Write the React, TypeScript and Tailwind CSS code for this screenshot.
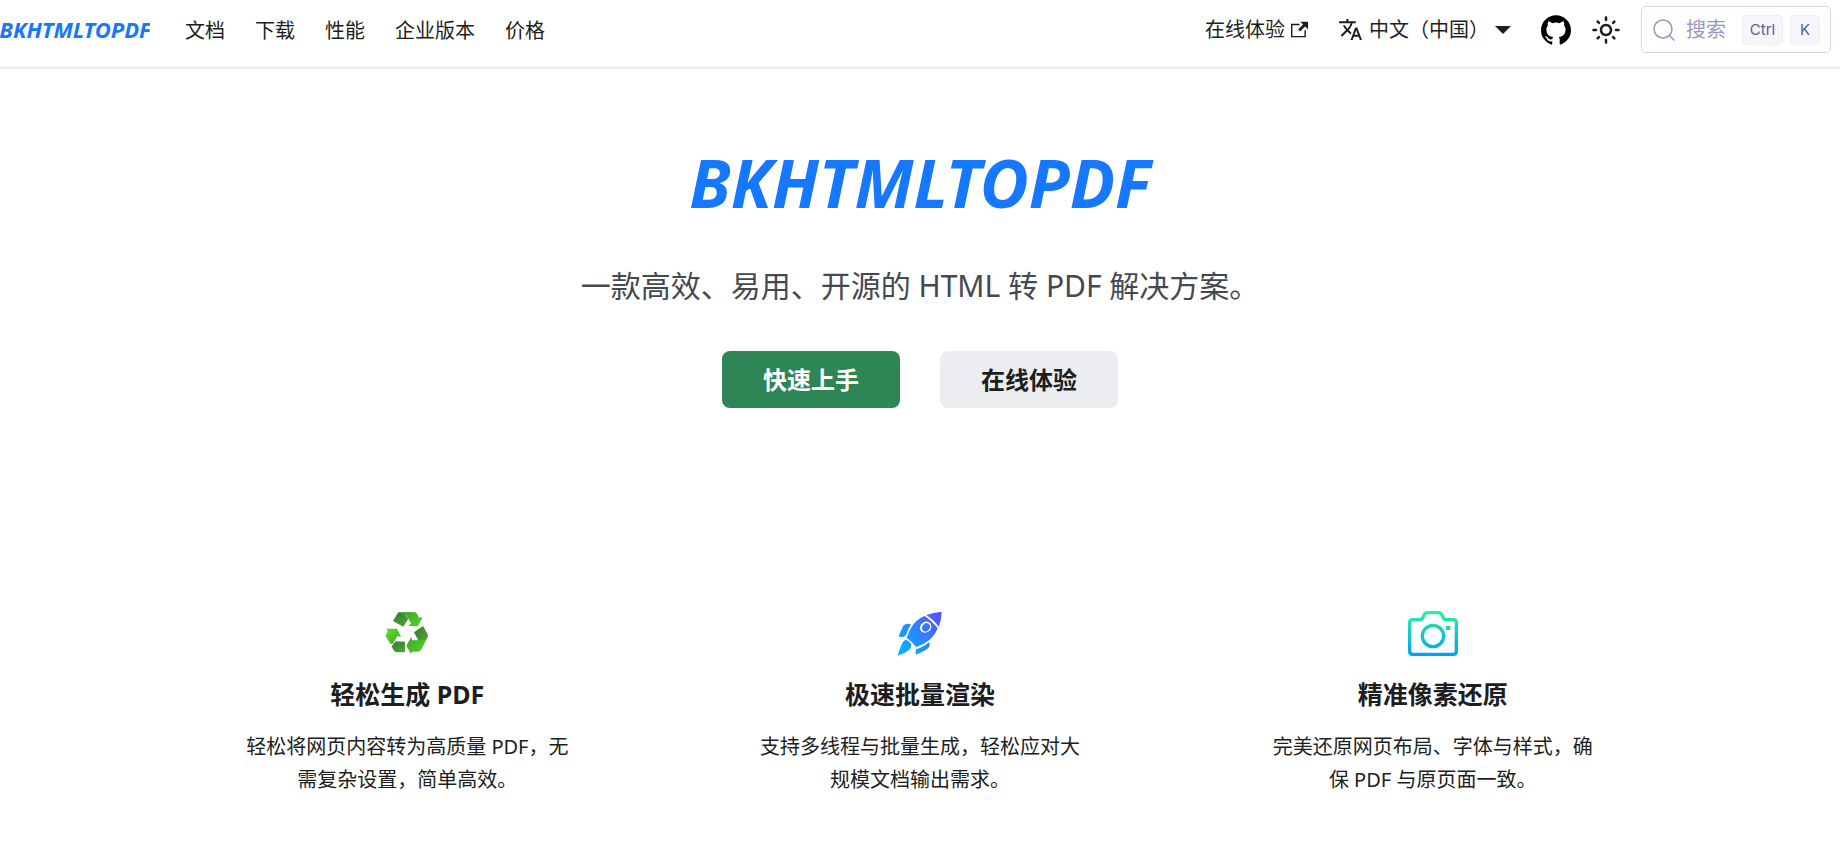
import React from 'react';

const navLinks = ['文档', '下载', '性能', '企业版本', '价格'];

const RecycleIcon = () => (
  <svg viewBox="40 25 150 150" className="size-[50px]" aria-hidden="true">
    <defs>
      <linearGradient id="leafA" x1="0" y1="0" x2="1" y2="1">
        <stop offset="0" stopColor="#35a52b" />
        <stop offset="1" stopColor="#58d824" />
      </linearGradient>
      <linearGradient id="leafB" x1="0" y1="0" x2="1" y2="1">
        <stop offset="0" stopColor="#66e01f" />
        <stop offset="1" stopColor="#35a52c" />
      </linearGradient>
      <linearGradient id="leafDark" x1="0" y1="0" x2="1" y2="1">
        <stop offset="0" stopColor="#2f7a2e" />
        <stop offset="1" stopColor="#55a83a" />
      </linearGradient>
    </defs>
    <path d="M89 38 L106 38 L119 57 L104 81 L73 64 Z" fill="url(#leafDark)" />
    <path d="M103 37 L139 38 Q144 39 147 46 L151 54 L162 53 L148 80 L120 79 L127 71 L112 45 Z" fill="url(#leafA)" />
    <path d="M53 87 L85 87 L97 112 L86 109 L73 132 L66 133 L52 112 Q50 107 53 102 L57 95 Z" fill="url(#leafB)" />
    <path d="M81 125 L109 126 L109 158 L84 158 Q77 157 74 150 L69 140 Z" fill="url(#leafDark)" />
    <path d="M163 79 L177 104 Q179 109 176 115 L170 125 L150 124 L136 98 Z" fill="url(#leafDark)" />
    <path d="M128 111 L130 122 L172 121 L159 148 Q155 156 146 156 L130 156 L127 163 L113 138 Z" fill="url(#leafA)" />
  </svg>
);

const RocketIcon = () => (
  <svg viewBox="49 25 150 150" className="size-[50px]" aria-hidden="true">
    <defs>
      <linearGradient id="rocket" gradientUnits="userSpaceOnUse" x1="60" y1="150" x2="189" y2="50">
        <stop offset="0" stopColor="#00b4ff" />
        <stop offset="1" stopColor="#5a50ff" />
      </linearGradient>
    </defs>
    <g fill="url(#rocket)">
      <path d="M143 46 Q164 38 189 36 Q189 60 180 81 Q172 70 162 61 Q153 53 143 46 Z" />
      <path
        fillRule="evenodd"
        d="M138 49 Q158 62 177 86 Q168 108 151 122 Q134 136 112 142 Q101 126 84 115 Q90 94 103 75 Q118 57 138 49 Z M136 67 Q124 73 124 86 Q126 99 138 99 Q153 98 158 84 Q158 68 147 66 Q141 65 136 67 Z"
      />
      <ellipse cx="142" cy="83" rx="11" ry="13" transform="rotate(38 142 83)" />
      <path d="M80 74 Q86 71 97 74 Q88 89 82 106 Q78 111 73 112 L63 112 Q60 111 61 107 L72 82 Q75 76 80 74 Z" />
      <path d="M151 128 Q156 139 149 145 Q142 152 114 164 Q110 165 111 160 L112 149 Q134 143 151 128 Z" />
      <path d="M82 121 Q92 123 98 135 Q98 145 91 151 Q82 159 60 167 Q57 168 58 164 Q66 136 75 125 Q78 121 82 121 Z" />
    </g>
  </svg>
);

const CameraIcon = () => (
  <svg viewBox="54 25 150 150" className="size-[50px]" aria-hidden="true">
    <defs>
      <linearGradient id="camera" gradientUnits="userSpaceOnUse" x1="129" y1="34" x2="129" y2="170">
        <stop offset="0" stopColor="#2af598" />
        <stop offset="1" stopColor="#009efd" />
      </linearGradient>
    </defs>
    <g fill="none" stroke="url(#camera)" strokeWidth="10" strokeLinejoin="round">
      <path d="M68 60 H90 Q96 60 98 55 L102 46 Q105 39 112 39 H146 Q153 39 156 46 L160 55 Q162 60 168 60 H190 Q199 60 199 69 V155 Q199 164 190 164 H68 Q59 164 59 155 V69 Q59 60 68 60 Z" />
      <circle cx="129" cy="109" r="32" />
    </g>
    <path d="M168 79 H181 V91 H168 Z" fill="#1cdcae" />
  </svg>
);

const features = [
  {
    title: '轻松生成 PDF',
    icon: <RecycleIcon />,
    text: '轻松将网页内容转为高质量 PDF，无需复杂设置，简单高效。',
  },
  {
    title: '极速批量渲染',
    icon: <RocketIcon />,
    text: '支持多线程与批量生成，轻松应对大规模文档输出需求。',
  },
  {
    title: '精准像素还原',
    icon: <CameraIcon />,
    text: '完美还原网页布局、字体与样式，确保 PDF 与原页面一致。',
  },
];

const Navbar = () => {
  return (
    <header className="flex h-[68px] items-center justify-between border-b border-[#e9e9ea] pr-[9px] pb-2 shadow-[0_1px_2px_rgba(0,0,0,0.06)]">
      <nav className="flex items-baseline" aria-label="主导航">
        {/* Logo */}
        <a
          href="#"
          className="mr-5 flex w-[150px] justify-center overflow-hidden text-[22px] leading-7 font-bold text-[#1677ff] italic"
        >
          BKHTMLTOPDF
        </a>
        {navLinks.map((link) => (
          <a key={link} href="#" className="px-[15px] hover:text-[#2e8555]">
            {link}
          </a>
        ))}
      </nav>

      <div className="flex items-center">
        <a href="#" className="flex items-center gap-[6px] px-[15px]">
          在线体验
          <svg viewBox="0 0 24 24" className="size-[17px]" fill="currentColor" aria-hidden="true">
            <path d="M21 13v10h-21v-19h12v2h-10v15h17v-8h2zm3-12h-10.988l4.035 4-6.977 7.07 2.828 2.828 6.977-7.07 4.125 4.172v-11z" />
          </svg>
        </a>
        <button type="button" className="flex items-center px-[15px]">
          <svg viewBox="0 0 24 24" className="mr-[6px] size-[25px]" fill="currentColor" aria-hidden="true">
            <path d="M12.87 15.07l-2.54-2.51.03-.03c1.74-1.94 2.98-4.17 3.71-6.53H17V4h-7V2H8v2H1v1.99h11.17C11.5 7.92 10.44 9.75 9 11.35 8.07 10.32 7.3 9.19 6.69 8h-2c.73 1.63 1.73 3.17 2.98 4.56l-5.09 5.02L4 19l5-5 3.11 3.11.76-2.04zM18.5 10h-2L12 22h2l1.12-3h4.75L21 22h2l-4.5-12zm-2.62 7l1.62-4.33L19.12 17h-3.24z" />
          </svg>
          中文（中国）
          <svg viewBox="0 0 16 8" className="ml-[6px] h-2 w-4" fill="currentColor" aria-hidden="true">
            <path d="M0 0h16l-8 8z" />
          </svg>
        </button>
        <a href="#" aria-label="GitHub" className="px-[15px] text-black">
          <svg viewBox="0 0 24 24" className="size-[30px]" fill="currentColor" aria-hidden="true">
            <path d="M12 .297c-6.63 0-12 5.373-12 12 0 5.303 3.438 9.8 8.205 11.385.6.113.82-.258.82-.577 0-.285-.01-1.04-.015-2.04-3.338.724-4.042-1.61-4.042-1.61C4.422 18.07 3.633 17.7 3.633 17.7c-1.087-.744.084-.729.084-.729 1.205.084 1.838 1.236 1.838 1.236 1.07 1.835 2.809 1.305 3.495.998.108-.776.417-1.305.76-1.605-2.665-.3-5.466-1.332-5.466-5.93 0-1.31.465-2.38 1.235-3.22-.135-.303-.54-1.523.105-3.176 0 0 1.005-.322 3.3 1.23.96-.267 1.98-.399 3-.405 1.02.006 2.04.138 3 .405 2.28-1.552 3.285-1.23 3.285-1.23.645 1.653.24 2.873.12 3.176.765.84 1.23 1.91 1.23 3.22 0 4.61-2.805 5.625-5.475 5.92.42.36.81 1.096.81 2.22 0 1.606-.015 2.896-.015 3.286 0 .315.21.69.825.57C20.565 22.092 24 17.592 24 12.297c0-6.627-5.373-12-12-12" />
          </svg>
        </a>
        <button type="button" aria-label="切换主题" className="flex size-10 items-center justify-center">
          <svg viewBox="0 0 24 24" className="size-[30px]" fill="currentColor" aria-hidden="true">
            <path d="M12,9c1.65,0,3,1.35,3,3s-1.35,3-3,3s-3-1.35-3-3S10.35,9,12,9 M12,7c-2.76,0-5,2.24-5,5s2.24,5,5,5s5-2.24,5-5 S14.76,7,12,7L12,7z M2,13l2,0c0.55,0,1-0.45,1-1s-0.45-1-1-1l-2,0c-0.55,0-1,0.45-1,1S1.45,13,2,13z M20,13l2,0c0.55,0,1-0.45,1-1 s-0.45-1-1-1l-2,0c-0.55,0-1,0.45-1,1S19.45,13,20,13z M11,2v2c0,0.55,0.45,1,1,1s1-0.45,1-1V2c0-0.55-0.45-1-1-1S11,1.45,11,2z M11,20v2c0,0.55,0.45,1,1,1s1-0.45,1-1v-2c0-0.55-0.45-1-1-1C11.45,19,11,19.45,11,20z M5.99,4.58c-0.39-0.39-1.03-0.39-1.41,0 c-0.39,0.39-0.39,1.03,0,1.41l1.06,1.06c0.39,0.39,1.03,0.39,1.41,0s0.39-1.03,0-1.41L5.99,4.58z M18.36,16.95 c-0.39-0.39-1.03-0.39-1.41,0c-0.39,0.39-0.39,1.03,0,1.41l1.06,1.06c0.39,0.39,1.03,0.39,1.41,0c0.39-0.39,0.39-1.03,0-1.41 L18.36,16.95z M19.42,5.99c0.39-0.39,0.39-1.03,0-1.41c-0.39-0.39-1.03-0.39-1.41,0l-1.06,1.06c-0.39,0.39-0.39,1.03,0,1.41 s1.03,0.39,1.41,0L19.42,5.99z M7.05,18.36c0.39-0.39,0.39-1.03,0-1.41c-0.39-0.39-1.03-0.39-1.41,0l-1.06,1.06 c-0.39,0.39-0.39,1.03,0,1.41s1.03,0.39,1.41,0L7.05,18.36z" />
          </svg>
        </button>

        {/* Buscador */}
        <button
          type="button"
          className="ml-[15px] flex h-[47px] w-[190px] items-center rounded-[5px] border border-[#d6d6e7] px-[10px] text-[#9698c3]"
        >
          <svg viewBox="0 0 24 24" className="mr-[10px] size-6" fill="none" stroke="currentColor" strokeWidth="1.5" aria-hidden="true">
            <circle cx="11" cy="11" r="9" />
            <path d="M17.5 17.5L22 22" strokeLinecap="round" />
          </svg>
          搜索
          <span className="ml-auto flex gap-[7px] font-['Inter',sans-serif] text-[15px] text-[#5a5e9a]">
            <kbd className="flex h-[30px] w-[41px] items-center justify-center rounded-[5px] border border-[#efeff5] bg-[#f5f5fa] font-[inherit]">
              Ctrl
            </kbd>
            <kbd className="flex h-[30px] w-[30px] items-center justify-center rounded-[5px] border border-[#efeff5] bg-[#f5f5fa] font-[inherit]">
              K
            </kbd>
          </span>
        </button>
      </div>
    </header>
  );
};

const Hero = () => {
  return (
    <section className="flex flex-col items-center pt-[75px] text-center">
      <h1 className="text-[67px] leading-[78px] font-bold text-[#1677ff] italic">BKHTMLTOPDF</h1>
      <p className="mt-[45px] text-[30px] leading-10 text-[#444950]">一款高效、易用、开源的 HTML 转 PDF 解决方案。</p>
      <div className="mt-[45px] flex gap-10 text-2xl font-bold">
        <a href="#" className="flex h-[57px] w-[178px] items-center justify-center rounded-lg bg-[#2e8555] text-white">
          快速上手
        </a>
        <a href="#" className="flex h-[57px] w-[178px] items-center justify-center rounded-lg bg-[#ebedf0]">
          在线体验
        </a>
      </div>
    </section>
  );
};

const Features = () => {
  return (
    <section className="mx-auto mt-[200px] grid max-w-[1538px] grid-cols-3 pb-10">
      {features.map((feature) => (
        <div key={feature.title} className="flex flex-col items-center text-center">
          {feature.icon}
          <h2 className="mt-5 text-[25px] leading-8 font-bold">{feature.title}</h2>
          <p className="mt-5 max-w-[332px] leading-[33px]">{feature.text}</p>
        </div>
      ))}
    </section>
  );
};

const App = () => {
  return (
    <div className="min-h-screen bg-white font-['Noto_Sans','Noto_Sans_CJK_SC',sans-serif] text-xl text-[#1c1e21]" lang="zh-CN">
      <Navbar />
      <main>
        <Hero />
        <Features />
      </main>
    </div>
  );
};

export default App;
